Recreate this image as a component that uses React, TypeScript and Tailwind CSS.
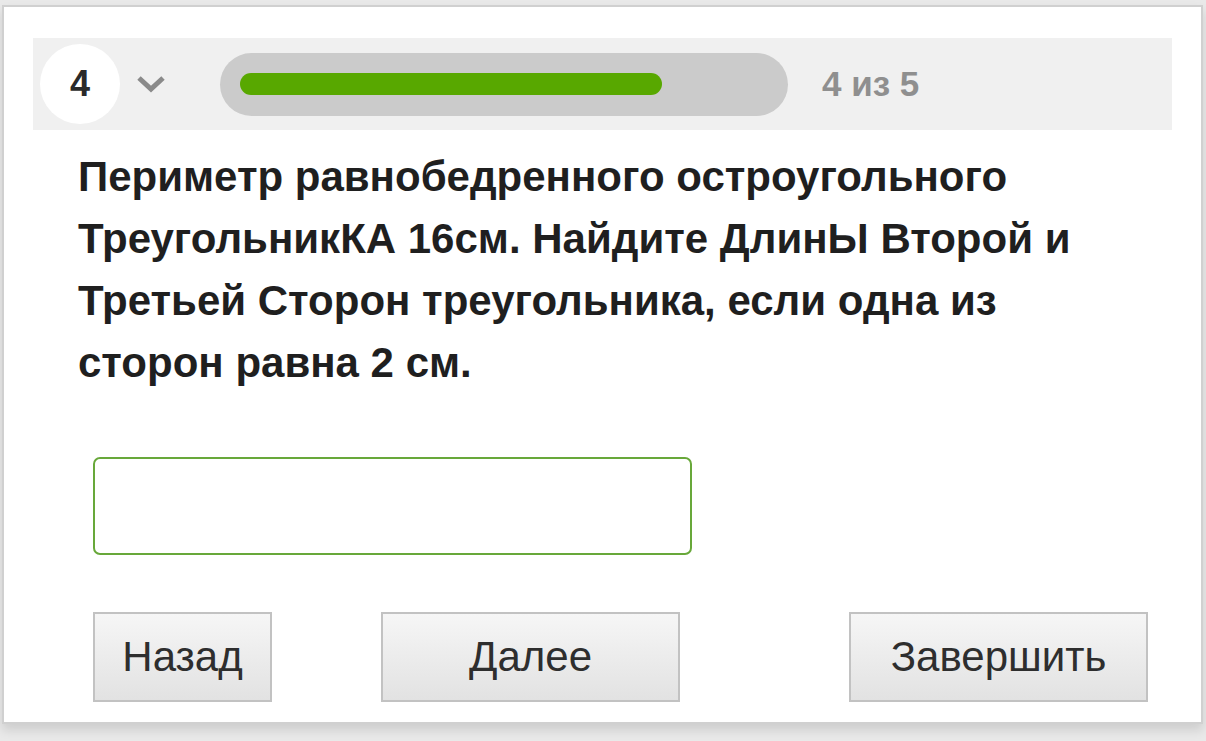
import React from "react";

const font = { fontFamily: '"Liberation Sans", Arial, sans-serif' };

function Button({ label, w }: { label: string; w: string }) {
  return (
    <button
      className={`${w} h-[90px] border-2 border-[#c2c2c2] bg-gradient-to-b from-[#f6f6f6] to-[#e2e2e2] text-[42px] text-[#2e2e2e] leading-none`}
    >
      {label}
    </button>
  );
}

export default function App() {
  return (
    <div className="w-[1206px] h-[741px] bg-[#e9e9e9] overflow-hidden" style={font}>
      <div className="ml-[2px] mr-[3px] mt-[5px] h-[719px] bg-white border-2 border-[#d0d0d0] shadow-[0_6px_10px_rgba(0,0,0,0.12)] pt-[31px] px-[29px]">
        {/* шапка с номером вопроса и прогрессом */}
        <div className="h-[92px] bg-[#f0f0f0] flex items-center pl-[7px]">
          <div className="w-[80px] h-[80px] rounded-full bg-white flex items-center justify-center text-[36px] font-bold text-[#2a2a2a]">
            4
          </div>
          <svg className="ml-[16px]" width="30" height="18" viewBox="0 0 30 18">
            <path d="M3 3 L15 14 L27 3" fill="none" stroke="#8a8a8a" strokeWidth="5" />
          </svg>
          <div className="ml-[54px] w-[568px] h-[63px] rounded-full bg-[#cbcbcb] flex items-center px-[20px]">
            <div className="w-[422px] h-[22px] rounded-full bg-[#58a800]" />
          </div>
          <div className="ml-[34px] text-[35px] font-bold text-[#8f8f8f]">4 из 5</div>
        </div>

        {/* текст вопроса */}
        <div className="pl-[45px] w-[1065px] pt-[16px] text-[42px] font-bold text-[#1f1f1f] leading-[62px]">
          Периметр равнобедренного остроугольного ТреугольникКА 16см. Найдите ДлинЫ Второй и
          Третьей Сторон треугольника, если одна из сторон равна 2 см.
        </div>

        {/* поле ответа */}
        <div className="pl-[60px] pt-[63px]">
          <input className="w-[599px] h-[98px] border-[2.5px] border-[#68a83a] rounded-[7px] outline-none" />
        </div>

        {/* кнопки */}
        <div className="pl-[60px] pt-[57px] flex">
          <Button label="Назад" w="w-[179px]" />
          <div className="ml-[109px]">
            <Button label="Далее" w="w-[299px]" />
          </div>
          <div className="ml-[169px]">
            <Button label="Завершить" w="w-[299px]" />
          </div>
        </div>
      </div>
    </div>
  );
}
